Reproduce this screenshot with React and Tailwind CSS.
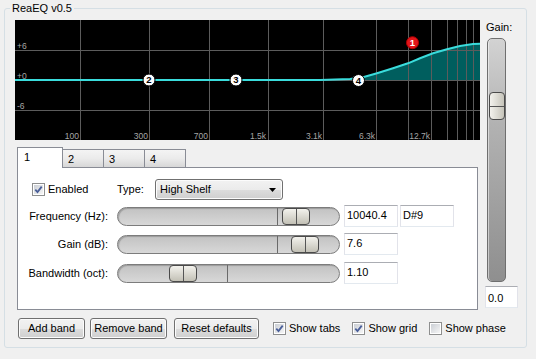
import React from "react";

const gridX = [65, 134, 194, 253, 308, 361, 393, 416, 432, 442, 451, 458];
const gridY = [30, 60, 90];

const freqLabels = [
  { x: 64, t: "100" },
  { x: 133, t: "300" },
  { x: 193, t: "700" },
  { x: 251, t: "1.5k" },
  { x: 307, t: "3.1k" },
  { x: 360, t: "6.3k" },
  { x: 415, t: "12.7k" },
];

const curve = [
  [0, 60], [305, 60], [335, 59], [348, 57.3], [362, 53.3], [378, 48.3],
  [393, 43.3], [405, 38.3], [418, 33.3], [432, 29.3], [445, 26], [458, 24], [465, 23.7],
];

const nodes = [
  { n: "2", x: 134, y: 60 },
  { n: "3", x: 221, y: 60 },
  { n: "4", x: 343.5, y: 60.5 },
  { n: "1", x: 397.5, y: 22.7, red: true },
];

const EqGraph = () => {
  const line = "M" + curve.map((p) => p.join(" ")).join(" L");
  const area =
    "M335 60 " + curve.slice(2).map((p) => "L" + p.join(" ")).join(" ") + " L465 60 Z";

  return (
    <svg width="465" height="120" viewBox="0 0 465 120" className="block bg-black">
      <path d={area} fill="#005e5e" />
      {gridX.map((x) => (
        <line key={x} x1={x + 0.5} x2={x + 0.5} y1="0" y2="120" stroke="#5c5c5c" />
      ))}
      {gridY.map((y) => (
        <line key={y} x1="0" x2="465" y1={y + 0.5} y2={y + 0.5} stroke="#5c5c5c" />
      ))}
      <g fontFamily="Liberation Sans, Arial, sans-serif" fontSize="8.5" fill="#a6a6a6">
        <text x="2" y="29">+6</text>
        <text x="2" y="59">+0</text>
        <text x="2" y="89">-6</text>
        {freqLabels.map((l) => (
          <text key={l.t} x={l.x} y="119" textAnchor="end">
            {l.t}
          </text>
        ))}
      </g>
      <path d={line} fill="none" stroke="#3adcdc" strokeWidth="2" />
      {nodes.map((p) => (
        <g key={p.n}>
          <circle
            cx={p.x}
            cy={p.y}
            r="6"
            fill={p.red ? "#e3151a" : "#ffffff"}
            stroke={p.red ? "#b00000" : "#000000"}
          />
          <text
            x={p.x}
            y={p.y + 3.3}
            textAnchor="middle"
            fontFamily="Liberation Sans, Arial, sans-serif"
            fontWeight="bold"
            fontSize="9.5"
            fill={p.red ? "#ffffff" : "#000000"}
          >
            {p.n}
          </text>
        </g>
      ))}
    </svg>
  );
};

const Check = ({ checked }) => (
  <span className="flex w-[13px] h-[13px] shrink-0 border border-[#8e8f8f] bg-white p-[1px]">
    <span className="flex flex-1 items-center justify-center bg-linear-to-br from-[#cbcfd5] to-[#f6f6f6]">
      {checked && (
        <svg width="9" height="9" viewBox="0 0 9 9">
          <path
            d="M1.3 4.6 L3.5 7 L7.7 1.6"
            fill="none"
            stroke="#4a5f99"
            strokeWidth="1.8"
          />
        </svg>
      )}
    </span>
  </span>
);

const CheckLabel = ({ checked, label, className }) => (
  <div className={`flex shrink-0 items-center gap-[3px] whitespace-nowrap ${className}`}>
    <Check checked={checked} />
    <span>{label}</span>
  </div>
);

const winBtn =
  "h-[21px] shrink-0 whitespace-nowrap rounded-[3px] border border-[#707070] bg-[linear-gradient(#f2f2f2,#ebebeb_50%,#dddddd_50%,#cfcfcf)] shadow-[inset_0_0_0_1px_#fcfcfc]";

const Field = ({ className, children }) => (
  <div
    className={`h-[22px] shrink-0 border border-[#abadb3] border-x-[#e2e3ea] border-b-[#e3e9ef] bg-white px-[2px] leading-[18px] ${className}`}
  >
    {children}
  </div>
);

const HSlider = ({ tick, thumb }) => (
  <div className="relative w-[223px] h-[19px] rounded-full border border-[#7c7c7c] bg-linear-to-b from-[#c2c2c2] to-[#d8d8d8] shadow-[inset_1px_1px_1px_rgba(0,0,0,0.2)]">
    <div className={`absolute top-0 bottom-0 w-px bg-[#6a6a6a] ${tick}`} />
    <div
      className={`absolute top-0 flex h-[17px] w-[28px] justify-center rounded-[4px] border border-[#4a4a4a] bg-linear-to-b from-[#f3f2ed] to-[#c3c1b6] ${thumb}`}
    >
      <div className="w-px h-full bg-[#555]" />
    </div>
  </div>
);

const params = [
  { label: "Frequency (Hz):", tick: "left-[159px]", thumb: "left-[164px]", value: "10040.4", note: "D#9", mt: "mt-[5px]" },
  { label: "Gain (dB):", tick: "left-[159px]", thumb: "left-[173px]", value: "7.6", mt: "mt-[6px]" },
  { label: "Bandwidth (oct):", tick: "left-[109px]", thumb: "left-[51px]", value: "1.10", mt: "mt-[7px]" },
];

const tabs = ["1", "2", "3", "4"];

const App = () => {
  return (
    <div className="w-[536px] h-[359px] overflow-hidden bg-[#f0f0f0] pl-[4px] pt-[2px] font-['Liberation_Sans',Arial,sans-serif] text-[11px] leading-[13px] text-black">
      <fieldset className="w-[523px] h-[346px] rounded-[3px] border border-[#d5dfe5]">
        <legend className="ml-[5px] px-[2px] leading-[13px]">ReaEQ v0.5</legend>

        <div className="flex pl-[10px] pt-[5px]">
          {/* left: graph, band tabs, buttons */}
          <div className="flex w-[465px] flex-col">
            <EqGraph />

            <div className="ml-[2px] mt-[7px] flex h-[20px] items-end">
              {tabs.map((t, i) =>
                i === 0 ? (
                  <div
                    key={t}
                    className="relative z-10 -mb-px h-[21px] w-[46px] border border-b-0 border-[#898c95] bg-white pl-[6px] pt-[3px]"
                  >
                    {t}
                  </div>
                ) : (
                  <div
                    key={t}
                    className="-ml-px h-[18px] w-[42px] border border-b-0 border-[#898c95] bg-linear-to-b from-[#f4f4f4] via-[#ebebeb] to-[#d7d7d7] pl-[5px] pt-[3px]"
                  >
                    {t}
                  </div>
                )
              )}
            </div>

            <div className="ml-[2px] h-[143px] w-[461px] border border-[#898c95] bg-white pl-[14px] pt-[11px]">
              <div className="flex h-[21px] items-center">
                <CheckLabel checked label="Enabled" className="w-[85px]" />
                <span className="w-[38px] shrink-0">Type:</span>
                <div className={`${winBtn} flex w-[128px] items-center justify-between pl-[4px] pr-[6px]`}>
                  <span>High Shelf</span>
                  <svg width="7" height="4" viewBox="0 0 7 4">
                    <path d="M0 0 H7 L3.5 4 Z" fill="#000" />
                  </svg>
                </div>
              </div>

              {params.map((p) => (
                <div key={p.label} className={`flex h-[22px] items-center ${p.mt}`}>
                  <div className="flex w-[76px] shrink-0 justify-end whitespace-nowrap">
                    <span>{p.label}</span>
                  </div>
                  <div className="ml-[9px] shrink-0">
                    <HSlider tick={p.tick} thumb={p.thumb} />
                  </div>
                  <Field className="ml-[4px] w-[54px]">{p.value}</Field>
                  {p.note && <Field className="ml-[2px] w-[54px]">{p.note}</Field>}
                </div>
              ))}
            </div>

            <div className="ml-[3px] mt-[8px] flex items-center">
              <button className={`${winBtn} w-[67px]`}>Add band</button>
              <button className={`${winBtn} ml-[5px] w-[77px]`}>Remove band</button>
              <button className={`${winBtn} ml-[7px] w-[85px]`}>Reset defaults</button>
              <CheckLabel checked label="Show tabs" className="ml-[14px]" />
              <CheckLabel checked label="Show grid" className="ml-[12px]" />
              <CheckLabel label="Show phase" className="ml-[12px]" />
            </div>
          </div>

          {/* right: master gain */}
          <div className="ml-[5px] flex w-[33px] flex-col">
            <span className="ml-[1px] mt-[1px]">Gain:</span>
            <div className="relative ml-[2px] mt-[4px] h-[244px] w-[19px] rounded-[5px] border border-[#6f6f6f] bg-linear-to-b from-[#d3d3d3] via-[#b2b2b2] via-35% to-[#8f8f8f] shadow-[inset_1px_0_0_rgba(255,255,255,0.5)]">
              <div className="absolute left-[1px] top-[53px] flex h-[28px] w-[16px] items-center rounded-[4px] border border-[#4a4a4a] bg-linear-to-r from-[#f3f2ed] to-[#c6c4ba]">
                <div className="h-px w-full bg-[#555]" />
              </div>
            </div>
            <Field className="mt-[4px] w-[33px] pt-[2px]">0.0</Field>
          </div>
        </div>
      </fieldset>
    </div>
  );
};

export default App;
